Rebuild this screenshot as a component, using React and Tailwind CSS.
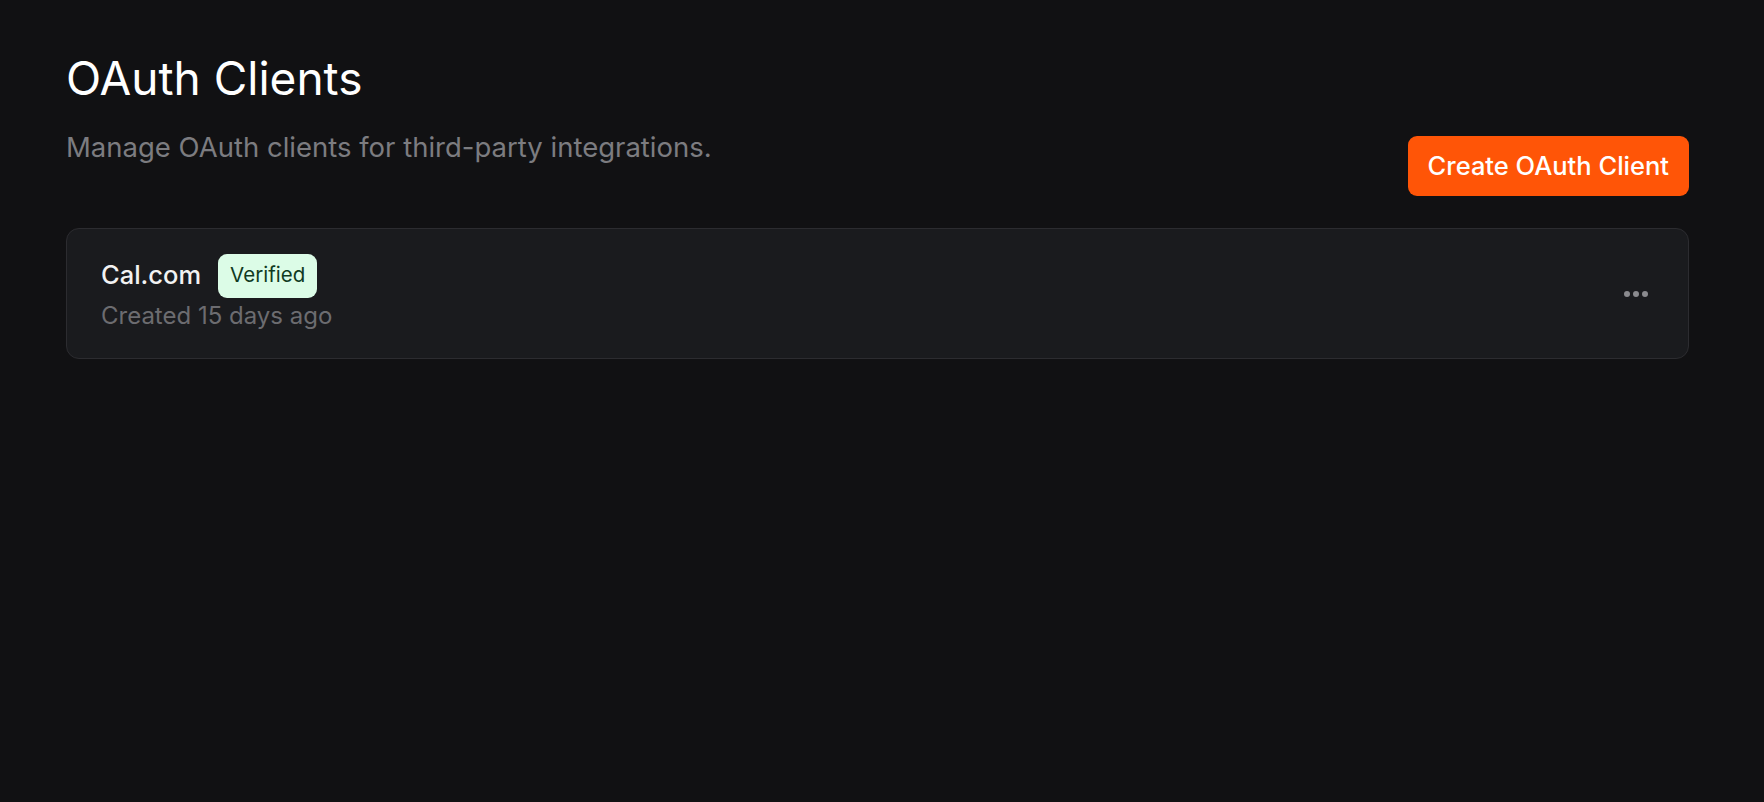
export default function App() {
  return (
    <div className="min-h-screen w-full bg-[#111113] font-['Inter',sans-serif]">
      <div className="pl-[66px] pr-[75px] pt-[51px]">
        <h1 className="text-[46px] leading-[54px] font-normal text-white">OAuth Clients</h1>
        <div className="mt-[22px] flex items-start justify-between">
          <p className="text-[27.5px] leading-[40px] text-[#7c7c80]">Manage OAuth clients for third-party integrations.</p>
          <button className="mt-[9px] h-[60px] rounded-[9px] bg-[#ff5507] px-[20px] text-[25.5px] font-medium text-white">
            Create OAuth Client
          </button>
        </div>
        <div className="mt-[32px] flex h-[131px] items-center justify-between rounded-[13px] border border-[#2c2c30] bg-[#1a1b1e] pl-[34px] pr-[36px]">
          <div className="flex flex-col">
            <div className="flex h-[44px] items-center gap-[17px]">
              <span className="text-[25.5px] font-medium text-[#f2f2f2]">Cal.com</span>
              <span className="flex h-[44px] items-center rounded-[9px] bg-[#dcfce7] px-[12px] text-[20.5px] font-normal text-[#103a1f]">Verified</span>
            </div>
            <span className="text-[24px] leading-[36px] text-[#6c6c70]">Created 15 days ago</span>
          </div>
          <button className="flex items-center gap-[3px] p-[4px]">
            <span className="h-[6px] w-[6px] rounded-full bg-[#8a8a8e]"></span>
            <span className="h-[6px] w-[6px] rounded-full bg-[#8a8a8e]"></span>
            <span className="h-[6px] w-[6px] rounded-full bg-[#8a8a8e]"></span>
          </button>
        </div>
      </div>
    </div>
  );
}
